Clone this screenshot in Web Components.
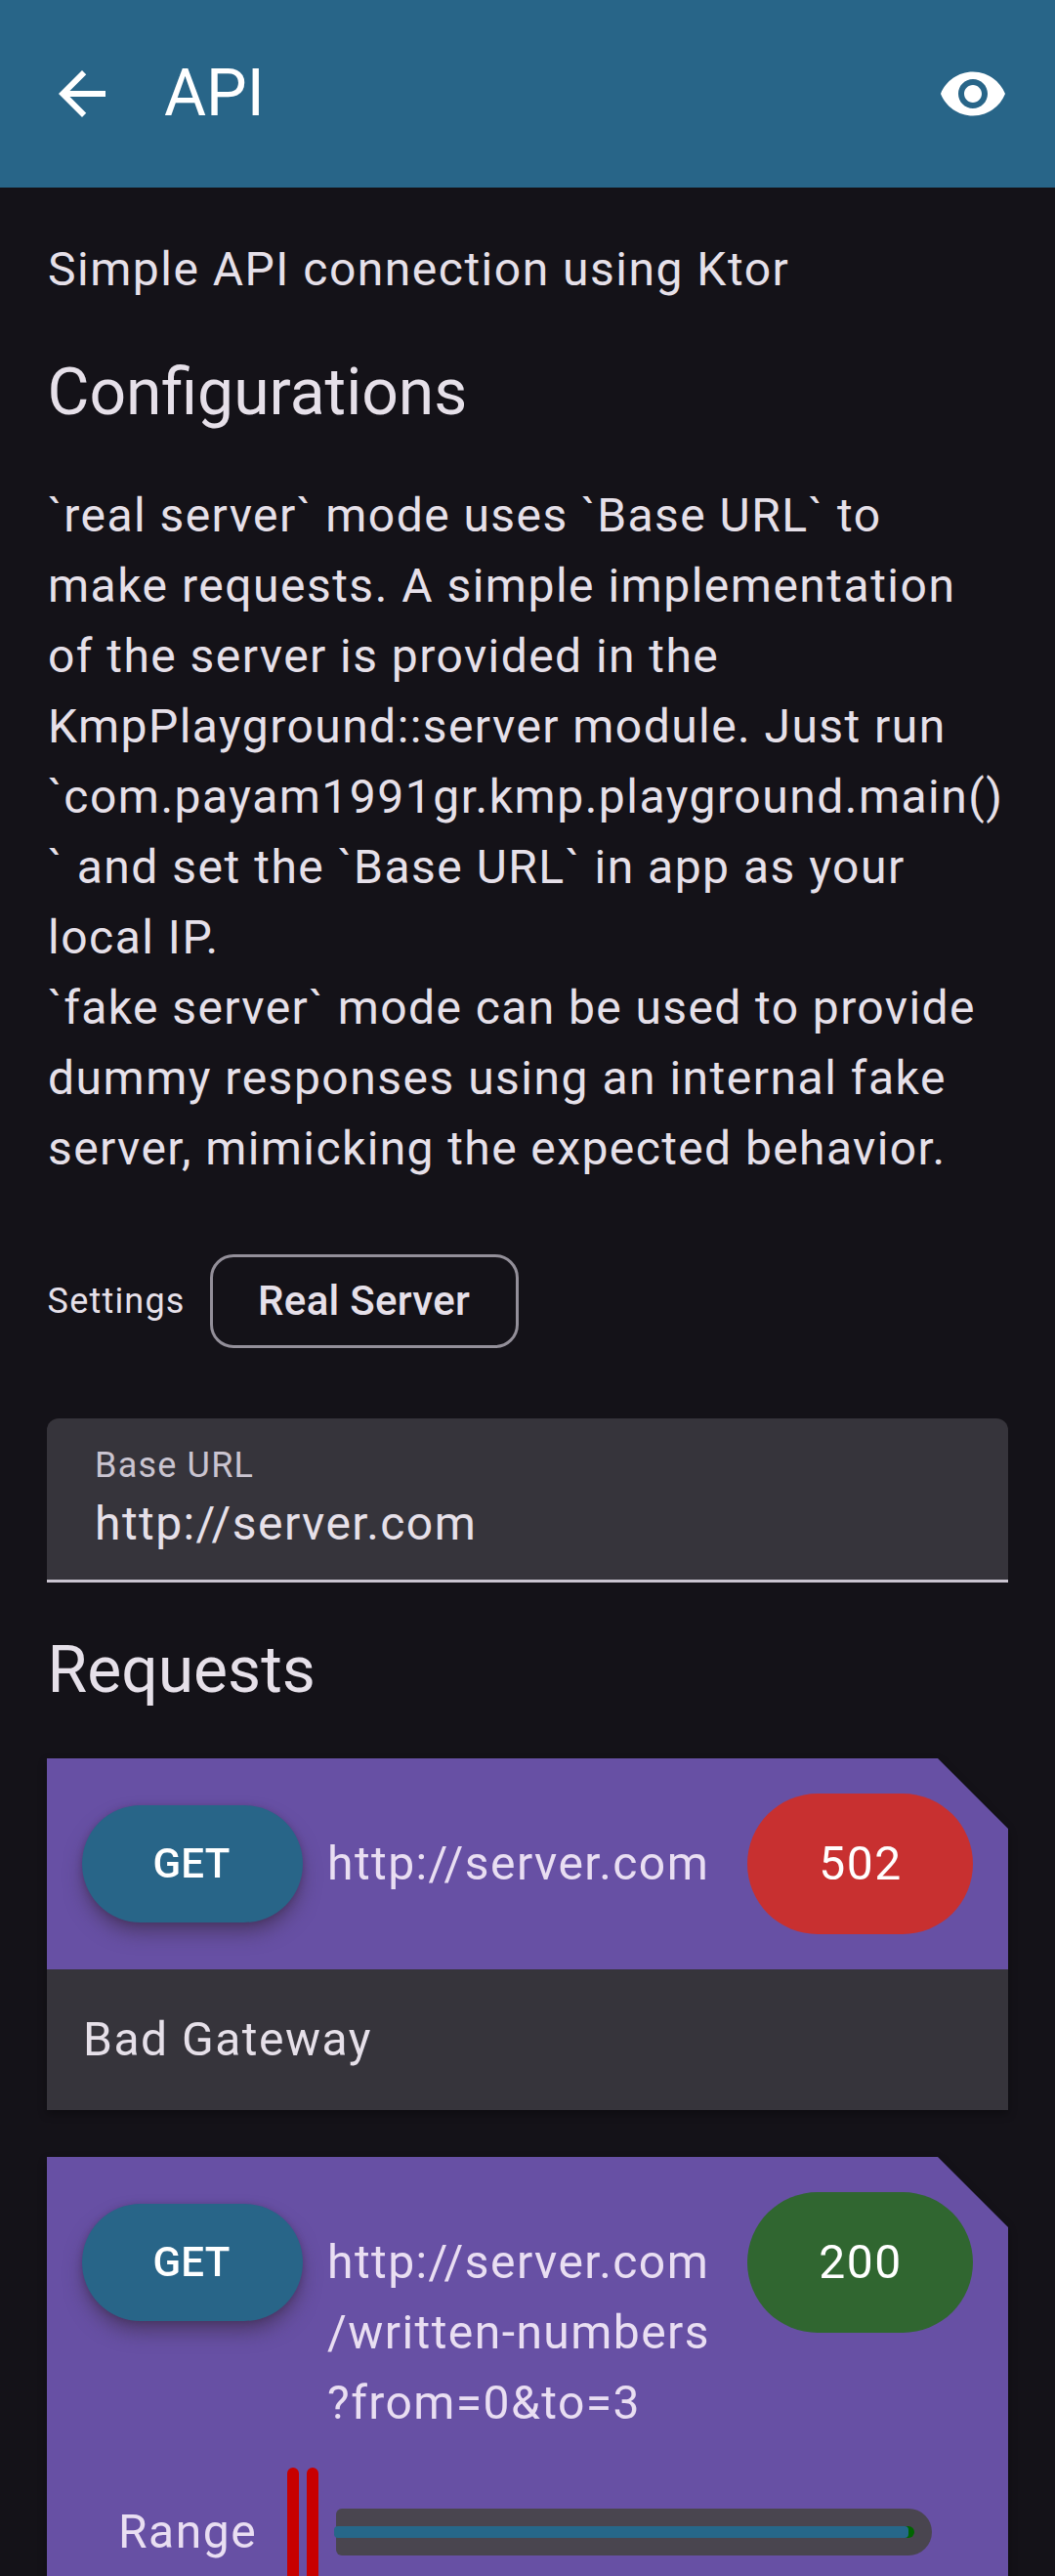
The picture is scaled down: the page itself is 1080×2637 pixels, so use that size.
<!DOCTYPE html>
<html lang="en">
<head>
<meta charset="utf-8">
<title>API</title>
<style>
html,body{margin:0;padding:0;background:#141218}
body{height:2637px;overflow:hidden;font:400 48px/72px Roboto,sans-serif;letter-spacing:1.5px;color:#e6e0e9}
</style>
</head>
<body>
<api-screen></api-screen>
<script>
const define = (name, css, html) => customElements.define(name, class extends HTMLElement {
  constructor() {
    super();
    this.attachShadow({mode: 'open'}).innerHTML = `<style>*{box-sizing:border-box}:host{box-sizing:border-box;display:block}${css}</style>${html}`;
  }
});

define('top-bar', `
  :host{display:flex;align-items:center;height:192px;padding:0 48px;background:#286588;color:#fff;
    font-size:66px;line-height:84px;letter-spacing:0}
  svg{width:72px;height:72px;fill:currentColor;flex:none}
  .title{flex:1;margin-left:48px}`, `
  <svg viewBox="0 0 24 24"><path d="M20 11H7.83l5.59-5.59L12 4l-8 8 8 8 1.41-1.41L7.83 13H20v-2z"/></svg>
  <div class="title"><slot></slot></div>
  <svg viewBox="0 0 24 24"><path d="M12 4.5C7 4.5 2.73 7.61 1 12c1.73 4.39 6 7.5 11 7.5s9.27-3.11 11-7.5c-1.73-4.39-6-7.5-11-7.5zM12 17c-2.76 0-5-2.24-5-5s2.24-5 5-5 5 2.24 5 5-2.24 5-5 5zm0-8c-1.66 0-3 1.34-3 3s1.34 3 3 3 3-1.34 3-3-1.34-3-3-3z"/></svg>`);

define('section-title', `:host{padding-left:.5px;font-size:66px;line-height:84px;letter-spacing:0}`, `<slot></slot>`);

define('body-text', `
  :host{padding-left:1px;white-space:pre}
  ::slotted(.tight){letter-spacing:1.44px}
  ::slotted(.tighter){letter-spacing:1.4px}`, `<slot></slot>`);

define('setting-row', `
  :host{display:flex;align-items:center;gap:25px;height:144px}
  .label{padding-left:.6px;font-size:36px;line-height:48px;letter-spacing:1.2px}`, `
  <div class="label">Settings</div><slot></slot>`);

define('outlined-chip', `
  :host{display:flex;align-items:center;justify-content:center;width:316px;height:96px;border:3px solid #938f99;border-radius:24px;
    font-size:42px;font-weight:500;line-height:60px;letter-spacing:.3px}`, `<slot></slot>`);

define('text-field', `
  :host{height:168px;padding:24px 48px 0 49px;background:#36343b;border-bottom:3px solid #cac4d0;border-radius:12px 12px 0 0;
    letter-spacing:1.44px}
  .label{font-size:36px;line-height:48px;letter-spacing:1.2px;color:#cac4d0}`, `
  <div class="label"><slot name="label"></slot></div><div><slot></slot></div>`);

define('method-button', `
  :host{display:flex;align-items:center;justify-content:center;width:226px;height:120px;margin:12px 0;padding-right:2px;border-radius:60px;
    background:#286588;color:#fff;font-size:42px;font-weight:500;line-height:60px;letter-spacing:.3px;
    box-shadow:0 12px 20px -2px rgba(55,40,60,.55),0 1px 6px rgba(70,40,80,.4)}`, `<slot></slot>`);

define('status-badge', `
  :host{display:flex;align-items:center;justify-content:center;width:231px;height:144px;padding-left:1px;border-radius:72px;background:#c83030;color:#fff}
  :host([ok]){background:#306630}`, `<slot></slot>`);

define('range-slider', `
  :host{display:flex;align-items:center;flex:1;height:132px}
  i{display:block;width:12px;height:132px;border-radius:6px;background:#c80000;flex:none;margin-right:8px}
  .track{flex:1;height:48px;margin-left:10px;border-radius:6px 24px 24px 6px;background:#49454f;
    display:flex;align-items:center;padding-right:18px}
  .rest{flex:1;height:12px;margin-left:-2px;border-radius:6px;background:#006400;padding-right:6px}
  .active{height:12px;border-radius:4px;background:#266789}`, `
  <i></i><i></i><div class="track"><div class="rest"><div class="active"></div></div></div>`);

define('slider-row', `
  :host{display:flex;align-items:center;margin-top:-6px;padding:0 42px 0 37px;gap:31px}`, `
  <div><slot></slot></div><range-slider></range-slider>`);

define('request-card', `
  :host{filter:drop-shadow(0 4px 4px rgba(0,0,0,.3))}
  .card{clip-path:polygon(0 0,calc(100% - 72px) 0,100% 72px,100% 100%,0 100%)}
  .head{padding:36px;background:#6750a4;color:#e9def2}
  .row{display:flex;align-items:flex-start}
  .url{flex:1;padding:36px 0;margin-left:25px;white-space:pre;letter-spacing:1.44px}
  ::slotted([slot=body]){display:block;padding:36px 37px;background:#36343b}`, `
  <div class="card"><div class="head"><div class="row">
    <slot name="method"></slot><div class="url"><slot name="url"></slot></div><slot name="status"></slot>
  </div><slot name="controls"></slot></div><slot name="body"></slot></div>`);

define('api-screen', `
  main{padding:48px;display:flex;flex-direction:column;gap:48px}
  [slot=url]{letter-spacing:1.44px}`, `
  <top-bar>API</top-bar>
  <main>
    <body-text>Simple API connection using Ktor</body-text>
    <section-title>Configurations</section-title>
    <body-text><span class="tight">\`real server\` mode uses \`Base URL\` to</span>
make requests. A simple implementation
<span class="tight">of the server is provided in the</span>
<span class="tight">KmpPlayground::server module. Just run</span>
\`com.payam1991gr.kmp.playground.main()
\` and set the \`Base URL\` in app as your
local IP.
<span class="tighter">\`fake server\` mode can be used to provide</span>
dummy responses using an internal fake
<span class="tighter">server, mimicking the expected behavior.</span></body-text>
    <setting-row><outlined-chip>Real Server</outlined-chip></setting-row>
    <text-field><span slot="label">Base URL</span>http://server.com</text-field>
    <section-title>Requests</section-title>
    <request-card>
      <method-button slot="method">GET</method-button>
      <span slot="url">http://server.com</span>
      <status-badge slot="status">502</status-badge>
      <div slot="body">Bad Gateway</div>
    </request-card>
    <request-card>
      <method-button slot="method">GET</method-button>
      <span slot="url">http://server.com
/written-numbers
?from=0&amp;to=3</span>
      <status-badge slot="status" ok>200</status-badge>
      <slider-row slot="controls">Range</slider-row>
    </request-card>
  </main>`);
</script>
</body>
</html>
